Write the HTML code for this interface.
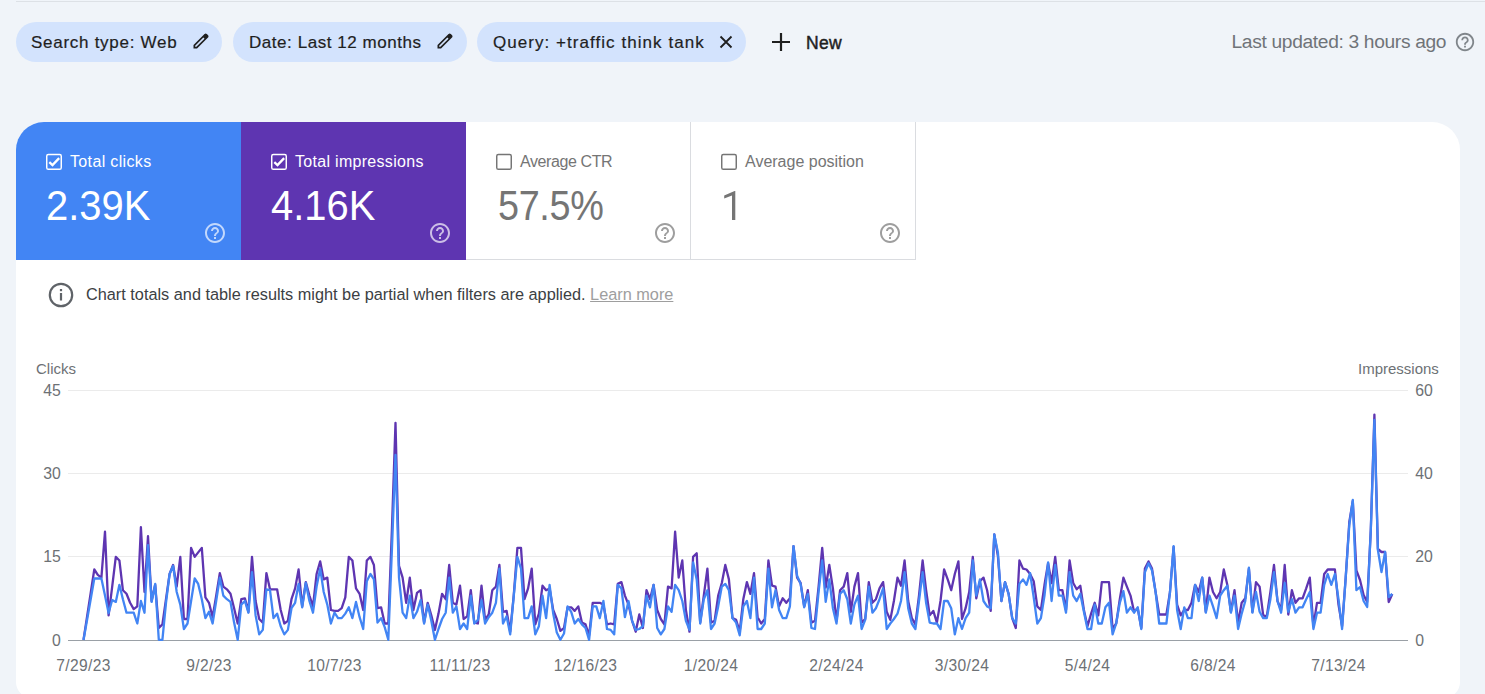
<!DOCTYPE html>
<html><head><meta charset="utf-8">
<style>
html,body{margin:0;padding:0;}
body{width:1485px;height:694px;overflow:hidden;background:#f0f4f9;position:relative;font-family:"Liberation Sans",sans-serif;}
.abs{position:absolute;}
.topline{left:16px;top:1px;width:1469px;height:1px;background:#dde1e6;}
.chip{position:absolute;top:22px;height:40px;border-radius:20px;background:#d3e3fd;}
.chip .t{position:absolute;top:1px;line-height:40px;font-size:17px;color:#1f1f1f;white-space:nowrap;-webkit-text-stroke:0.2px #1f1f1f;}
.chip svg{position:absolute;}
.card{position:absolute;left:16px;top:122px;width:1444px;height:575.5px;background:#fff;border-radius:28px 28px 16px 16px;overflow:hidden;}
.tile{position:absolute;top:0;width:225px;height:138px;box-sizing:border-box;}
.tile .lab{position:absolute;left:54px;top:30.8px;font-size:16px;line-height:18px;white-space:nowrap;}
.tile .val{position:absolute;left:30px;top:60.5px;font-size:42px;line-height:46px;white-space:nowrap;}
.tile svg.cb{position:absolute;left:0;top:0;}
.tile svg.help{position:absolute;left:187px;top:99.1px;}
.ax{position:absolute;font-size:15px;color:#6d7175;white-space:nowrap;line-height:17px;}
.yl{left:20px;width:40.8px;text-align:right;font-size:15.8px;}
.yr{left:1415.2px;font-size:15.8px;}
.xl{top:657px;width:100px;text-align:center;letter-spacing:0.35px;font-size:15.6px;}
</style></head>
<body>
<div class="abs topline"></div>

<div class="chip" style="left:16px;width:206px;">
  <span class="t" style="left:15px;letter-spacing:0.72px;">Search type: Web</span>
  <svg style="left:175px;top:9.4px" width="20" height="20" viewBox="0 -960 960 960"><path d="M200-200h57l391-391-57-57-391 391v57Zm-80 80v-170l528-527q12-11 26.5-17t30.5-6q16 0 31 6t26 18l55 56q12 11 17.5 26t5.5 30q0 16-5.5 30.5T817-647L290-120H120Zm640-584-56-56 56 56Zm-141 85-28-29 57 57-29-28Z" fill="#1f1f1f"/></svg>
</div>
<div class="chip" style="left:233px;width:234px;">
  <span class="t" style="left:16px;letter-spacing:0.55px;">Date: Last 12 months</span>
  <svg style="left:202px;top:9.4px" width="20" height="20" viewBox="0 -960 960 960"><path d="M200-200h57l391-391-57-57-391 391v57Zm-80 80v-170l528-527q12-11 26.5-17t30.5-6q16 0 31 6t26 18l55 56q12 11 17.5 26t5.5 30q0 16-5.5 30.5T817-647L290-120H120Zm640-584-56-56 56 56Zm-141 85-28-29 57 57-29-28Z" fill="#1f1f1f"/></svg>
</div>
<div class="chip" style="left:477px;width:269px;">
  <span class="t" style="left:16px;letter-spacing:1.05px;">Query: +traffic think tank</span>
  <svg style="left:241px;top:12px" width="16" height="16" viewBox="0 0 16 16"><path d="M2.5 2.5 L13.5 13.5 M13.5 2.5 L2.5 13.5" stroke="#1f1f1f" stroke-width="1.8"/></svg>
</div>
<svg class="abs" style="left:770px;top:31px" width="22" height="22" viewBox="0 0 22 22"><path d="M11 2 V20 M2 11 H20" stroke="#1f1f1f" stroke-width="2.2"/></svg>
<div class="abs" style="left:806px;top:22.8px;line-height:40px;font-size:17.5px;color:#1f1f1f;-webkit-text-stroke:0.45px #1f1f1f;letter-spacing:0.3px;">New</div>

<div class="abs" style="left:1231.5px;top:21.7px;line-height:40px;font-size:19.2px;letter-spacing:-0.33px;color:#6f7378;white-space:nowrap;">Last updated: 3 hours ago</div>
<svg class="abs" style="left:1454px;top:30.5px" width="22" height="22" viewBox="0 0 24 24"><path d="M11 18h2v-2h-2v2zm1-16C6.48 2 2 6.48 2 12s4.48 10 10 10 10-4.48 10-10S17.52 2 12 2zm0 18c-4.41 0-8-3.59-8-8s3.59-8 8-8 8 3.59 8 8-3.59 8-8 8zm0-14c-2.21 0-4 1.79-4 4h2c0-1.1.9-2 2-2s2 .9 2 2c0 2-3 1.75-3 5h2c0-2.25 3-2.5 3-5 0-2.21-1.79-4-4-4z" fill="#80868b"/></svg>

<div class="card">
  <div class="tile" style="left:0px;background:#4285f4;color:#fff;">
    <svg class="cb" width="60" height="60" viewBox="0 0 60 60"><rect x="30.75" y="32.5" width="14.5" height="14.8" rx="1.6" fill="none" stroke="#fff" stroke-width="1.45"/><polyline points="33.3,40.1 36.5,43.1 43.15,36.1" fill="none" stroke="#fff" stroke-width="2.3"/></svg>
    <div class="lab" style="letter-spacing:0.35px">Total clicks</div>
    <div class="val" style="letter-spacing:0px;left:29.8px;transform:scaleX(0.95);transform-origin:0 0">2.39K</div>
    <svg class="help" width="24" height="24" viewBox="0 0 24 24"><path d="M11 18h2v-2h-2v2zm1-16C6.48 2 2 6.48 2 12s4.48 10 10 10 10-4.48 10-10S17.52 2 12 2zm0 18c-4.41 0-8-3.59-8-8s3.59-8 8-8 8 3.59 8 8-3.59 8-8 8zm0-14c-2.21 0-4 1.79-4 4h2c0-1.1.9-2 2-2s2 .9 2 2c0 2-3 1.75-3 5h2c0-2.25 3-2.5 3-5 0-2.21-1.79-4-4-4z" fill="rgba(255,255,255,0.68)"/></svg>
  </div>
  <div class="tile" style="left:225px;background:#5e35b1;color:#fff;">
    <svg class="cb" width="60" height="60" viewBox="0 0 60 60"><rect x="30.75" y="32.5" width="14.5" height="14.8" rx="1.6" fill="none" stroke="#fff" stroke-width="1.45"/><polyline points="33.3,40.1 36.5,43.1 43.15,36.1" fill="none" stroke="#fff" stroke-width="2.3"/></svg>
    <div class="lab" style="letter-spacing:0.3px">Total impressions</div>
    <div class="val" style="letter-spacing:0px;left:29.8px;transform:scaleX(0.95);transform-origin:0 0">4.16K</div>
    <svg class="help" width="24" height="24" viewBox="0 0 24 24"><path d="M11 18h2v-2h-2v2zm1-16C6.48 2 2 6.48 2 12s4.48 10 10 10 10-4.48 10-10S17.52 2 12 2zm0 18c-4.41 0-8-3.59-8-8s3.59-8 8-8 8 3.59 8 8-3.59 8-8 8zm0-14c-2.21 0-4 1.79-4 4h2c0-1.1.9-2 2-2s2 .9 2 2c0 2-3 1.75-3 5h2c0-2.25 3-2.5 3-5 0-2.21-1.79-4-4-4z" fill="rgba(255,255,255,0.68)"/></svg>
  </div>
  <div class="tile" style="left:450px;border-right:1px solid #dadce0;border-bottom:1px solid #dadce0;color:#757575;">
    <svg class="cb" width="60" height="60" viewBox="0 0 60 60"><rect x="30.75" y="32.5" width="14.5" height="14.8" rx="1.6" fill="none" stroke="#757575" stroke-width="1.45"/></svg>
    <div class="lab" style="letter-spacing:-0.4px">Average CTR</div>
    <div class="val" style="letter-spacing:-0.4px;left:31.5px;transform:scaleX(0.9);transform-origin:0 0">57.5%</div>
    <svg class="help" width="24" height="24" viewBox="0 0 24 24"><path d="M11 18h2v-2h-2v2zm1-16C6.48 2 2 6.48 2 12s4.48 10 10 10 10-4.48 10-10S17.52 2 12 2zm0 18c-4.41 0-8-3.59-8-8s3.59-8 8-8 8 3.59 8 8-3.59 8-8 8zm0-14c-2.21 0-4 1.79-4 4h2c0-1.1.9-2 2-2s2 .9 2 2c0 2-3 1.75-3 5h2c0-2.25 3-2.5 3-5 0-2.21-1.79-4-4-4z" fill="#9e9e9e"/></svg>
  </div>
  <div class="tile" style="left:675px;border-right:1px solid #dadce0;border-bottom:1px solid #dadce0;color:#757575;">
    <svg class="cb" width="60" height="60" viewBox="0 0 60 60"><rect x="30.75" y="32.5" width="14.5" height="14.8" rx="1.6" fill="none" stroke="#757575" stroke-width="1.45"/></svg>
    <div class="lab" style="letter-spacing:0px">Average position</div>
    <svg style="position:absolute;left:0;top:0" width="225" height="138" viewBox="691 122 225 138"><path d="M735.3 191.1 L735.3 219.9 L732 219.9 L732 195.4 L724.2 198.4 L724.2 195.5 L734.6 191.1 Z" fill="#757575"/></svg>
    <svg class="help" width="24" height="24" viewBox="0 0 24 24"><path d="M11 18h2v-2h-2v2zm1-16C6.48 2 2 6.48 2 12s4.48 10 10 10 10-4.48 10-10S17.52 2 12 2zm0 18c-4.41 0-8-3.59-8-8s3.59-8 8-8 8 3.59 8 8-3.59 8-8 8zm0-14c-2.21 0-4 1.79-4 4h2c0-1.1.9-2 2-2s2 .9 2 2c0 2-3 1.75-3 5h2c0-2.25 3-2.5 3-5 0-2.21-1.79-4-4-4z" fill="#9e9e9e"/></svg>
  </div>
</div>

<svg class="abs" style="left:48px;top:282px" width="26" height="26" viewBox="0 0 26 26"><circle cx="13" cy="13" r="11.2" fill="none" stroke="#5f6368" stroke-width="2.2"/><rect x="11.9" y="11" width="2.2" height="7.5" fill="#5f6368"/><rect x="11.9" y="7" width="2.2" height="2.2" fill="#5f6368"/></svg>
<div class="abs" style="left:86px;top:285px;font-size:16.3px;line-height:18px;color:#3c4043;white-space:nowrap;">Chart totals and table results might be partial when filters are applied. <span style="color:#9e9e9e;text-decoration:underline;">Learn more</span></div>

<div class="ax" style="left:36px;top:359.8px;">Clicks</div>
<div class="ax" style="left:1358px;top:359.8px;">Impressions</div>

<!--CHART-->
<svg class="abs" style="left:0;top:0" width="1485" height="694" viewBox="0 0 1485 694">
<line x1="68" y1="390.5" x2="1408" y2="390.5" stroke="#ebebeb" stroke-width="1"/>
<line x1="68" y1="473.5" x2="1408" y2="473.5" stroke="#ebebeb" stroke-width="1"/>
<line x1="68" y1="556.5" x2="1408" y2="556.5" stroke="#ebebeb" stroke-width="1"/>
<line x1="68" y1="640.5" x2="1408" y2="640.5" stroke="#9aa0a6" stroke-width="1"/>
<polyline points="83.5,639.8 87.1,616.3 90.7,592.9 94.3,569.5 97.8,574.9 101.4,577.6 105.0,531.7 108.6,615.4 112.2,586.6 115.8,556.9 119.4,560.5 122.9,590.2 126.5,593.8 130.1,602.8 133.7,609.1 137.3,606.4 140.9,527.2 144.5,592.0 148.0,536.2 151.6,601.0 155.2,584.8 158.8,628.0 162.4,624.4 166.0,599.2 169.6,574.0 173.1,565.0 176.7,586.6 180.3,556.9 183.9,619.0 187.5,619.0 191.1,547.9 194.7,556.9 198.2,552.4 201.8,547.9 205.4,597.4 209.0,602.8 212.6,617.2 216.2,595.6 219.8,573.1 223.3,586.6 226.9,589.3 230.5,593.8 234.1,608.2 237.7,623.5 241.3,599.2 244.9,598.3 248.4,611.8 252.0,556.9 255.6,601.0 259.2,619.0 262.8,622.6 266.4,573.1 270.0,589.3 273.5,589.3 277.1,589.3 280.7,610.0 284.3,623.5 287.9,620.8 291.5,599.2 295.1,588.4 298.6,569.5 302.2,606.4 305.8,582.1 309.4,595.6 313.0,606.4 316.6,574.0 320.2,561.4 323.7,579.4 327.3,577.6 330.9,610.0 334.5,610.9 338.1,610.9 341.7,608.2 345.3,597.4 348.8,556.9 352.4,560.5 356.0,588.4 359.6,593.8 363.2,610.0 366.8,560.5 370.4,556.9 373.9,565.0 377.5,608.2 381.1,607.3 384.7,623.5 388.3,623.5 391.9,530.0 395.5,422.9 399.0,565.9 402.6,577.6 406.2,602.8 409.8,577.6 413.4,610.0 417.0,592.9 420.6,590.2 424.1,622.6 427.7,602.8 431.3,615.4 434.9,629.9 438.5,613.6 442.1,593.8 445.7,599.2 449.2,565.0 452.8,602.8 456.4,604.6 460.0,585.7 463.6,619.0 467.2,616.3 470.8,590.2 474.3,622.6 477.9,623.5 481.5,585.7 485.1,619.9 488.7,614.5 492.3,590.2 495.9,586.6 499.4,565.0 503.0,611.8 506.6,610.9 510.2,631.7 513.8,594.7 517.4,547.9 521.0,547.9 524.5,599.2 528.1,588.4 531.7,568.6 535.3,624.4 538.9,613.6 542.5,585.7 546.1,590.2 549.6,588.4 553.2,610.0 556.8,619.0 560.4,630.8 564.0,628.0 567.6,607.3 571.2,607.3 574.7,610.9 578.3,606.4 581.9,622.6 585.5,624.4 589.1,635.3 592.7,602.8 596.3,602.8 599.8,602.8 603.4,604.6 607.0,624.4 610.6,623.5 614.2,624.4 617.8,583.9 621.4,582.1 624.9,595.6 628.5,604.6 632.1,620.8 635.7,631.7 639.3,614.5 642.9,628.0 646.5,590.2 650.0,599.2 653.6,584.8 657.2,610.0 660.8,619.0 664.4,624.4 668.0,586.6 671.6,588.4 675.1,531.7 678.7,577.6 682.3,560.5 685.9,610.0 689.5,631.7 693.1,556.9 696.7,553.3 700.2,622.6 703.8,595.6 707.4,568.6 711.0,622.6 714.6,620.8 718.2,595.6 721.8,583.0 725.3,565.0 728.9,579.4 732.5,618.1 736.1,619.9 739.7,631.7 743.3,599.2 746.9,582.1 750.4,593.8 754.0,573.1 757.6,617.2 761.2,623.5 764.8,619.0 768.4,560.5 772.0,585.7 775.5,586.6 779.1,606.4 782.7,598.3 786.3,602.8 789.9,598.3 793.5,546.1 797.1,577.6 800.6,583.0 804.2,606.4 807.8,590.2 811.4,622.6 815.0,620.8 818.6,586.6 822.2,547.9 825.7,587.5 829.3,565.0 832.9,588.4 836.5,620.8 840.1,590.2 843.7,586.6 847.3,573.1 850.8,611.8 854.4,586.6 858.0,573.1 861.6,622.6 865.2,619.0 868.8,582.1 872.4,602.8 875.9,599.2 879.5,588.4 883.1,582.1 886.7,611.8 890.3,619.9 893.9,601.0 897.5,577.6 901.0,585.7 904.6,560.5 908.2,601.0 911.8,618.1 915.4,624.4 919.0,595.6 922.6,560.5 926.1,590.2 929.7,615.4 933.3,610.9 936.9,622.6 940.5,601.0 944.1,569.5 947.7,579.4 951.2,590.2 954.8,574.0 958.4,561.4 962.0,619.0 965.6,608.2 969.2,592.0 972.8,556.9 976.3,598.3 979.9,581.2 983.5,577.6 987.1,590.2 990.7,610.9 994.3,534.4 997.9,556.0 1001.4,601.0 1005.0,582.1 1008.6,593.8 1012.2,618.1 1015.8,628.0 1019.4,560.5 1023.0,568.6 1026.5,569.5 1030.1,574.0 1033.7,581.2 1037.3,606.4 1040.9,610.0 1044.5,584.8 1048.1,563.2 1051.6,583.0 1055.2,556.9 1058.8,590.2 1062.4,590.2 1066.0,610.0 1069.6,560.5 1073.2,583.0 1076.7,589.3 1080.3,585.7 1083.9,610.0 1087.5,626.2 1091.1,613.6 1094.7,602.8 1098.3,615.4 1101.8,582.1 1105.4,582.1 1109.0,582.1 1112.6,629.0 1116.2,623.5 1119.8,599.2 1123.4,577.6 1126.9,586.6 1130.5,595.6 1134.1,611.8 1137.7,608.2 1141.3,628.0 1144.9,568.6 1148.5,561.4 1152.0,568.6 1155.6,592.0 1159.2,614.5 1162.8,614.5 1166.4,614.5 1170.0,592.0 1173.6,547.0 1177.1,604.6 1180.7,615.4 1184.3,610.0 1187.9,610.0 1191.5,602.8 1195.1,584.8 1198.7,592.0 1202.2,577.6 1205.8,611.8 1209.4,577.6 1213.0,592.0 1216.6,598.3 1220.2,592.0 1223.8,569.5 1227.3,584.8 1230.9,611.8 1234.5,590.2 1238.1,622.6 1241.7,602.8 1245.3,598.3 1248.9,568.6 1252.4,611.8 1256.0,582.1 1259.6,586.6 1263.2,615.4 1266.8,616.3 1270.4,592.0 1274.0,565.0 1277.5,601.0 1281.1,610.0 1284.7,565.0 1288.3,614.5 1291.9,590.2 1295.5,602.8 1299.1,598.3 1302.6,598.3 1306.2,588.4 1309.8,577.6 1313.4,626.2 1317.0,602.8 1320.6,602.8 1324.2,574.0 1327.7,569.5 1331.3,569.5 1334.9,569.5 1338.5,604.6 1342.1,626.2 1345.7,577.6 1349.3,522.0 1352.8,501.0 1356.4,570.4 1360.0,580.0 1363.6,595.0 1367.2,602.0 1370.8,530.0 1374.4,414.6 1377.9,549.0 1381.5,552.0 1385.1,552.0 1388.7,602.0 1392.3,594.0" fill="none" stroke="#5e35b1" stroke-width="2.3" stroke-linejoin="round"/>
<polyline points="83.5,640.0 87.1,619.9 90.7,599.2 94.3,578.5 97.8,578.5 101.4,578.5 105.0,595.6 108.6,613.0 112.2,600.0 115.8,601.9 119.4,584.8 122.9,599.2 126.5,612.7 130.1,612.7 133.7,612.7 137.3,623.5 140.9,601.0 144.5,612.7 148.0,545.2 151.6,601.9 155.2,583.9 158.8,639.8 162.4,639.8 166.0,602.8 169.6,574.0 173.1,565.9 176.7,592.0 180.3,604.6 183.9,629.0 187.5,623.5 191.1,601.0 194.7,578.5 198.2,583.9 201.8,599.2 205.4,618.1 209.0,611.8 212.6,623.5 216.2,601.0 219.8,577.6 223.3,595.6 226.9,599.2 230.5,601.9 234.1,622.6 237.7,639.8 241.3,604.6 244.9,601.0 248.4,612.7 252.0,572.2 255.6,615.4 259.2,634.4 262.8,629.9 266.4,589.3 270.0,590.2 273.5,618.1 277.1,613.6 280.7,626.2 284.3,634.4 287.9,629.9 291.5,608.2 295.1,602.8 298.6,583.9 302.2,607.3 305.8,583.0 309.4,601.0 313.0,612.7 316.6,586.6 320.2,568.6 323.7,592.0 327.3,604.6 330.9,623.5 334.5,612.7 338.1,618.1 341.7,618.1 345.3,613.6 348.8,607.3 352.4,618.1 356.0,601.9 359.6,617.2 363.2,629.0 366.8,581.2 370.4,574.0 373.9,579.4 377.5,622.6 381.1,618.1 384.7,627.1 388.3,639.8 391.9,550.0 395.5,455.0 399.0,577.6 402.6,612.7 406.2,618.1 409.8,595.6 413.4,618.1 417.0,611.8 420.6,600.1 424.1,623.5 427.7,604.6 431.3,620.8 434.9,639.8 438.5,629.0 442.1,619.0 445.7,612.7 449.2,577.6 452.8,612.7 456.4,606.4 460.0,629.0 463.6,623.5 467.2,629.0 470.8,595.6 474.3,623.5 477.9,619.9 481.5,600.1 485.1,623.5 488.7,617.2 492.3,612.7 495.9,602.8 499.4,568.6 503.0,623.5 506.6,616.3 510.2,634.4 513.8,595.6 517.4,556.9 521.0,568.6 524.5,618.1 528.1,618.1 531.7,606.4 535.3,634.4 538.9,626.2 542.5,595.6 546.1,618.1 549.6,584.8 553.2,613.6 556.8,632.6 560.4,639.8 564.0,633.5 567.6,606.4 571.2,611.8 574.7,623.5 578.3,619.0 581.9,624.4 585.5,628.0 589.1,639.8 592.7,606.4 596.3,606.4 599.8,618.1 603.4,601.0 607.0,629.0 610.6,629.9 614.2,634.4 617.8,584.8 621.4,588.4 624.9,617.2 628.5,601.0 632.1,620.8 635.7,629.9 639.3,629.0 642.9,626.2 646.5,595.6 650.0,607.3 653.6,584.8 657.2,628.0 660.8,634.4 664.4,629.0 668.0,606.4 671.6,611.8 675.1,584.8 678.7,590.2 682.3,601.0 685.9,620.8 689.5,629.9 693.1,562.3 696.7,579.4 700.2,623.5 703.8,599.2 707.4,590.2 711.0,629.0 714.6,623.5 718.2,606.4 721.8,586.6 725.3,583.9 728.9,590.2 732.5,618.1 736.1,622.6 739.7,635.3 743.3,606.4 746.9,601.0 750.4,618.1 754.0,577.6 757.6,629.0 761.2,629.0 764.8,623.5 768.4,568.6 772.0,607.3 775.5,590.2 779.1,610.0 782.7,618.1 786.3,618.1 789.9,606.4 793.5,546.1 797.1,575.8 800.6,583.9 804.2,607.3 807.8,593.8 811.4,628.0 815.0,629.0 818.6,592.0 822.2,560.5 825.7,601.9 829.3,579.4 832.9,608.2 836.5,623.5 840.1,593.8 843.7,590.2 847.3,599.2 850.8,623.5 854.4,604.6 858.0,595.6 861.6,629.0 865.2,619.9 868.8,586.6 872.4,612.7 875.9,608.2 879.5,599.2 883.1,588.4 886.7,629.0 890.3,623.5 893.9,619.0 897.5,613.6 901.0,601.0 904.6,572.2 908.2,608.2 911.8,623.5 915.4,629.0 919.0,601.0 922.6,572.2 926.1,602.8 929.7,622.6 933.3,623.5 936.9,623.5 940.5,629.0 944.1,601.0 947.7,601.0 951.2,608.2 954.8,634.4 958.4,618.1 962.0,629.0 965.6,618.1 969.2,612.7 972.8,560.5 976.3,595.6 979.9,579.4 983.5,601.0 987.1,606.4 990.7,608.2 994.3,534.4 997.9,552.4 1001.4,601.0 1005.0,582.1 1008.6,593.8 1012.2,618.1 1015.8,623.5 1019.4,583.9 1023.0,579.4 1026.5,584.8 1030.1,573.1 1033.7,597.4 1037.3,623.5 1040.9,618.1 1044.5,595.6 1048.1,562.3 1051.6,601.0 1055.2,565.0 1058.8,595.6 1062.4,595.6 1066.0,612.7 1069.6,572.2 1073.2,595.6 1076.7,601.0 1080.3,593.8 1083.9,611.8 1087.5,629.0 1091.1,629.0 1094.7,604.6 1098.3,623.5 1101.8,623.5 1105.4,607.3 1109.0,602.8 1112.6,634.4 1116.2,623.5 1119.8,602.8 1123.4,591.1 1126.9,612.7 1130.5,607.3 1134.1,612.7 1137.7,607.3 1141.3,629.0 1144.9,572.2 1148.5,563.2 1152.0,570.4 1155.6,592.0 1159.2,623.5 1162.8,623.5 1166.4,623.5 1170.0,592.0 1173.6,546.1 1177.1,610.0 1180.7,629.0 1184.3,607.3 1187.9,618.1 1191.5,618.1 1195.1,584.8 1198.7,601.0 1202.2,577.6 1205.8,612.7 1209.4,595.6 1213.0,606.4 1216.6,618.1 1220.2,595.6 1223.8,590.2 1227.3,585.7 1230.9,612.7 1234.5,595.6 1238.1,629.0 1241.7,613.6 1245.3,601.0 1248.9,567.7 1252.4,612.7 1256.0,592.0 1259.6,611.8 1263.2,618.1 1266.8,618.1 1270.4,599.2 1274.0,572.2 1277.5,601.0 1281.1,612.7 1284.7,583.0 1288.3,611.8 1291.9,599.2 1295.5,612.7 1299.1,607.3 1302.6,607.3 1306.2,599.2 1309.8,592.0 1313.4,629.0 1317.0,612.7 1320.6,612.7 1324.2,584.8 1327.7,574.0 1331.3,584.8 1334.9,574.0 1338.5,599.2 1342.1,629.0 1345.7,577.6 1349.3,525.0 1352.8,500.0 1356.4,590.2 1360.0,587.0 1363.6,601.0 1367.2,607.0 1370.8,530.0 1374.4,420.0 1377.9,550.0 1381.5,572.0 1385.1,552.0 1388.7,597.0 1392.3,594.0" fill="none" stroke="#4285f4" stroke-width="2.3" stroke-linejoin="round"/>
</svg>
<div class="ax yl" style="top:381.5px;">45</div>
<div class="ax yl" style="top:464.5px;">30</div>
<div class="ax yl" style="top:547.5px;">15</div>
<div class="ax yl" style="top:631.5px;">0</div>
<div class="ax yr" style="top:381.5px;">60</div>
<div class="ax yr" style="top:464.5px;">40</div>
<div class="ax yr" style="top:547.5px;">20</div>
<div class="ax yr" style="top:631.5px;">0</div>
<div class="ax xl" style="left:33.5px;">7/29/23</div>
<div class="ax xl" style="left:159.0px;">9/2/23</div>
<div class="ax xl" style="left:284.5px;">10/7/23</div>
<div class="ax xl" style="left:410.0px;">11/11/23</div>
<div class="ax xl" style="left:535.5px;">12/16/23</div>
<div class="ax xl" style="left:661.0px;">1/20/24</div>
<div class="ax xl" style="left:786.5px;">2/24/24</div>
<div class="ax xl" style="left:912.0px;">3/30/24</div>
<div class="ax xl" style="left:1037.5px;">5/4/24</div>
<div class="ax xl" style="left:1163.0px;">6/8/24</div>
<div class="ax xl" style="left:1288.5px;">7/13/24</div>
<!--/CHART-->
</body></html>
